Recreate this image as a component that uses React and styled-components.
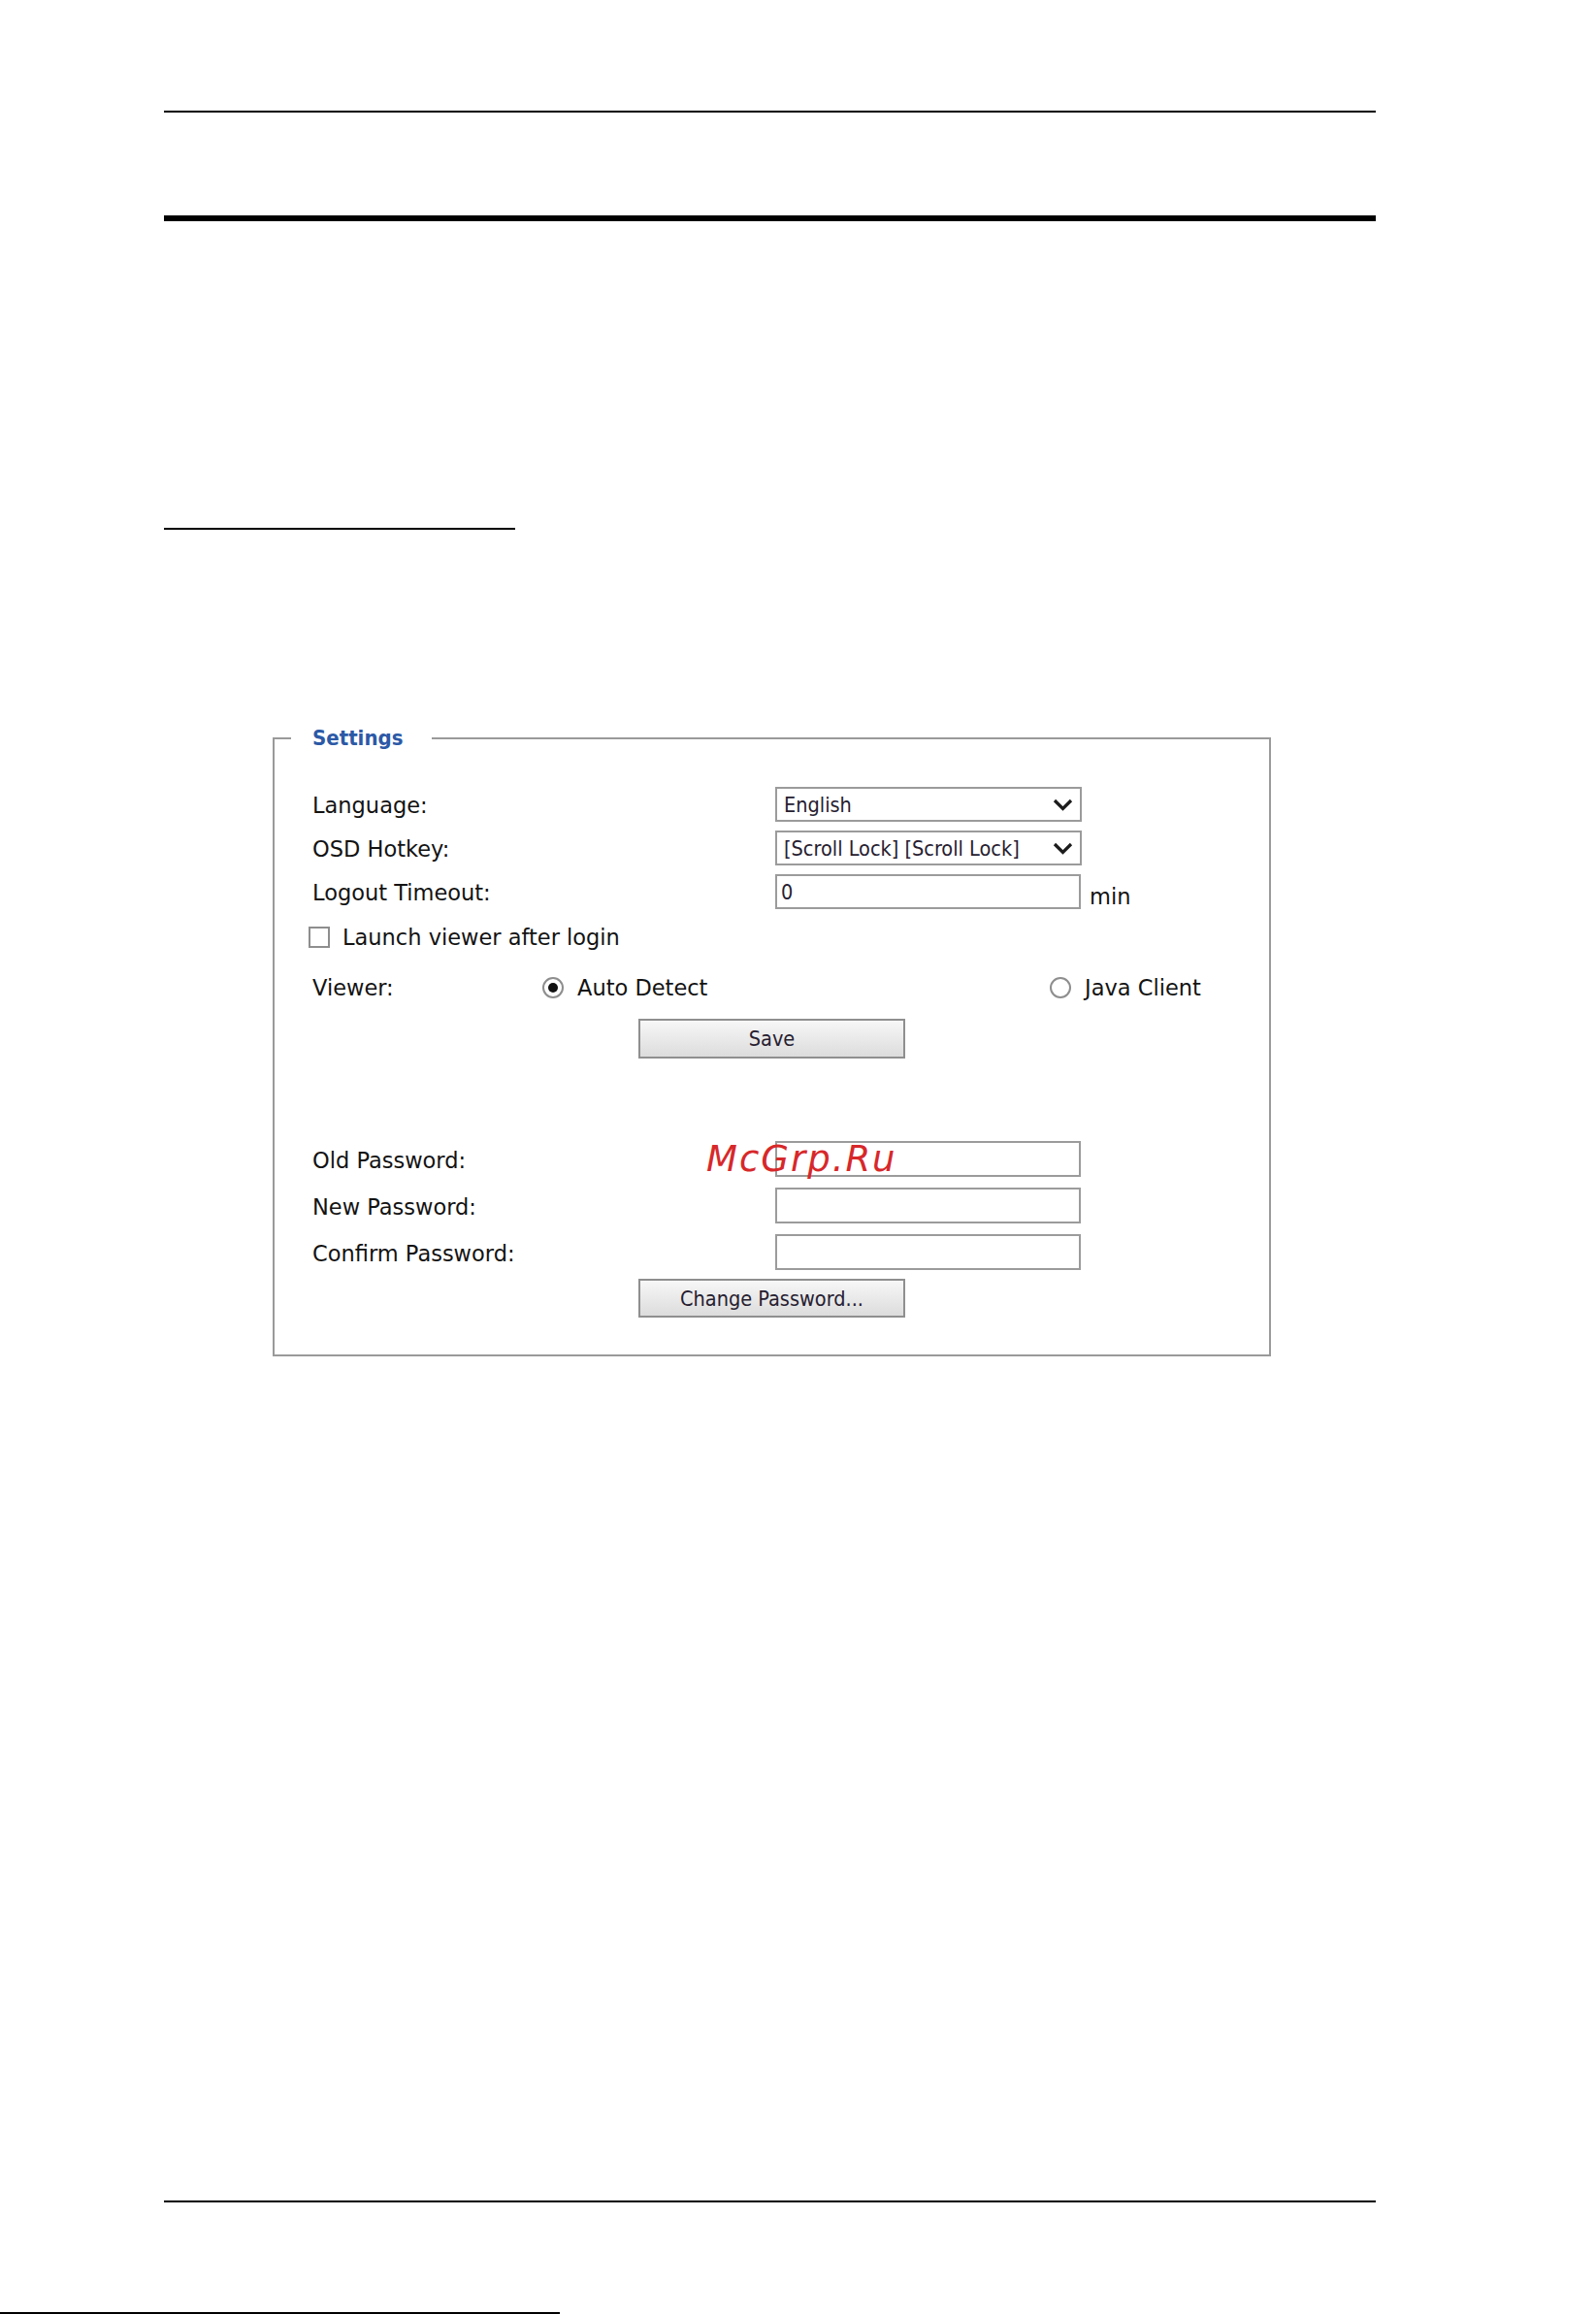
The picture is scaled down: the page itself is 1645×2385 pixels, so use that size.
import styled, { createGlobalStyle } from 'styled-components';

const GlobalStyle = createGlobalStyle`
  html, body {
    margin: 0;
    padding: 0;
    background: #ffffff;
  }
  body {
    font-family: "DejaVu Sans", Verdana, sans-serif;
    color: #131313;
  }
`;

const Page = styled.div`
  width: 1645px;
  height: 2385px;
  display: flex;
  flex-direction: column;
  overflow: hidden;
`;

const Rule = styled.div`
  flex: none;
  height: ${(p) => p.$thick}px;
  width: ${(p) => p.$width}px;
  margin-left: ${(p) => (p.$left ?? 169)}px;
  margin-top: ${(p) => p.$top || 0}px;
  background: #000000;
`;

const Spacer = styled.div`
  flex: 1;
`;

const Settings = styled.fieldset`
  flex: none;
  box-sizing: border-box;
  width: 1029px;
  margin: 203px 0 0 281px;
  padding: 38px 39px 38px 39px;
  border: 2px solid #9a9a9a;
  display: flex;
  flex-direction: column;
  min-inline-size: 0;
`;

const Legend = styled.legend`
  margin-left: -22px;
  padding: 0 30px 0 22px;
  font-family: "DejaVu Sans Condensed", "Liberation Sans", sans-serif;
  font-weight: bold;
  font-size: 22px;
  line-height: 24px;
  color: #2c59a6;
`;

const FieldRow = styled.div`
  display: flex;
  align-items: center;
  height: ${(p) => p.$height || 36}px;
  margin-top: ${(p) => p.$gap || 0}px;
  margin-left: ${(p) => p.$shift || 0}px;
  position: relative;
`;

const Label = styled.span`
  flex: none;
  width: ${(p) => p.$width || 477}px;
  padding-top: 2px;
  font-size: 22.5px;
  line-height: 26px;
  white-space: nowrap;
`;

const Text = styled.span`
  font-size: 22.5px;
  line-height: 26px;
  white-space: nowrap;
`;

const SelectBox = styled.div`
  box-sizing: border-box;
  width: 316px;
  height: 36px;
  border: 2px solid #9b9b9b;
  background: #ffffff;
  display: flex;
  align-items: center;
  justify-content: space-between;
  padding: 0 7px 0 7px;
  font-family: "DejaVu Sans Condensed", "Liberation Sans", sans-serif;
  font-size: 21.5px;
  color: #262030;
`;

const TextInput = styled.input`
  box-sizing: border-box;
  width: 315px;
  height: ${(p) => p.$height || 36}px;
  margin: 0;
  border: 2px solid #9b9b9b;
  border-radius: 0;
  padding: 0 4px;
  background: #ffffff;
  font-family: "DejaVu Sans Condensed", "Liberation Sans", sans-serif;
  font-size: 21.5px;
  color: #262030;
  outline: none;
`;

const Unit = styled.span`
  margin-left: 9px;
  align-self: flex-end;
  font-size: 22.5px;
  line-height: 26px;
`;

const CheckBox = styled.span`
  flex: none;
  box-sizing: border-box;
  width: 22px;
  height: 22px;
  border: 2px solid #8e8e8e;
  background: #ffffff;
  margin-right: 13px;
`;

const ViewerRow = styled.div`
  display: grid;
  grid-template-columns: 237px 523px auto;
  align-items: center;
  height: 30px;
  margin-top: 22px;
`;

const RadioOption = styled.label`
  display: flex;
  align-items: center;
  gap: 14px;
`;

const Radio = styled.span`
  flex: none;
  box-sizing: border-box;
  width: 22px;
  height: 22px;
  border-radius: 50%;
  border: 2px solid #8e8e8e;
  background: #ffffff;
  display: flex;
  align-items: center;
  justify-content: center;

  &::after {
    content: '';
    width: 10px;
    height: 10px;
    border-radius: 50%;
    background: ${(p) => (p.$checked ? '#111111' : 'transparent')};
  }
`;

const Button = styled.button`
  align-self: center;
  box-sizing: border-box;
  width: 275px;
  height: ${(p) => p.$height || 41}px;
  margin-top: ${(p) => p.$gap}px;
  border: 2px solid #8f8f8f;
  border-radius: 0;
  background: linear-gradient(#f7f7f7, #dcdcdc);
  font-family: "DejaVu Sans Condensed", "Liberation Sans", sans-serif;
  font-size: 21.5px;
  color: #262030;
  padding: 0;
`;

const Watermark = styled.span`
  position: absolute;
  left: 406px;
  top: 0;
  font-family: "DejaVu Sans", sans-serif;
  font-style: oblique;
  font-size: 37px;
  line-height: 37px;
  letter-spacing: 2px;
  color: #d7282a;
  pointer-events: none;
`;

function Chevron() {
  return (
    <svg width="21" height="13" viewBox="0 0 21 13">
      <polyline points="2,2 10.5,10.5 19,2" fill="none" stroke="#1c1c1c" strokeWidth="3.2" />
    </svg>
  );
}

function Select({ value }) {
  return (
    <SelectBox>
      <span>{value}</span>
      <Chevron />
    </SelectBox>
  );
}

export default function App() {
  return (
    <>
      <GlobalStyle />
      <Page>
        <Rule $top={114} $thick={2} $width={1249} />
        <Rule $top={106} $thick={6} $width={1249} />
        <Rule $top={316} $thick={2} $width={362} />

        <Settings>
          <Legend>Settings</Legend>

          <FieldRow>
            <Label>Language:</Label>
            <Select value="English" />
          </FieldRow>
          <FieldRow $gap={9}>
            <Label>OSD Hotkey:</Label>
            <Select value="[Scroll Lock] [Scroll Lock]" />
          </FieldRow>
          <FieldRow $gap={9}>
            <Label>Logout Timeout:</Label>
            <TextInput defaultValue="0" />
            <Unit>min</Unit>
          </FieldRow>

          <FieldRow $gap={14} $height={30} $shift={-4}>
            <CheckBox />
            <Text>Launch viewer after login</Text>
          </FieldRow>

          <ViewerRow>
            <Text>Viewer:</Text>
            <RadioOption>
              <Radio $checked />
              <Text>Auto Detect</Text>
            </RadioOption>
            <RadioOption>
              <Radio />
              <Text>Java Client</Text>
            </RadioOption>
          </ViewerRow>

          <Button $gap={17}>Save</Button>

          <FieldRow $gap={85} $height={37}>
            <Label>Old Password:</Label>
            <TextInput type="password" $height={37} />
            <Watermark>McGrp.Ru</Watermark>
          </FieldRow>
          <FieldRow $gap={11} $height={37}>
            <Label>New Password:</Label>
            <TextInput type="password" $height={37} />
          </FieldRow>
          <FieldRow $gap={11} $height={37}>
            <Label>Confirm Password:</Label>
            <TextInput type="password" $height={37} />
          </FieldRow>

          <Button $gap={9} $height={40}>Change Password...</Button>
        </Settings>

        <Spacer />
        <Rule $thick={2} $width={1249} />
        <Rule $top={113} $thick={2} $width={577} $left={0} />
      </Page>
    </>
  );
}
